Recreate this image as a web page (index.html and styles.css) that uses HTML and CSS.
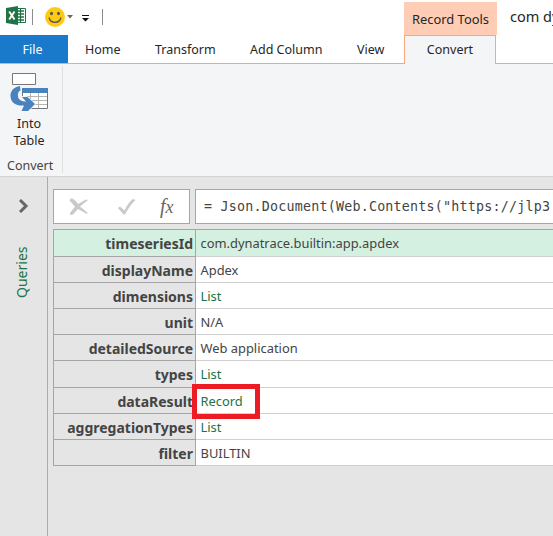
FILE: index.html
```
<!DOCTYPE html>
<html lang="en">
<head>
<meta charset="utf-8">
<title>Query Editor</title>
<link rel="stylesheet" href="styles.css">
</head>
<body>
<div class="app">
  <header class="header">
    <div class="quick">
      <svg class="excel" width="21" height="20" viewBox="0 0 21 20">
        <path d="M11 2.500h8.500v14H11" fill="#fff" stroke="#217346"/>
        <path d="M11 5h7M11 8h7M11 11h7M11 14h7M14.500 3v13" stroke="#217346" stroke-width="1.300"/>
        <path d="M0 2 12 0v19L0 17z" fill="#217346"/>
        <path d="m3.200 5.500 5.300 8M8.500 5.500l-5.300 8" stroke="#fff" stroke-width="1.900"/>
      </svg>
      <i class="sep"></i>
      <svg class="smile" width="20" height="20" viewBox="0 0 20 20">
        <circle cx="10" cy="10" r="10" fill="#ffcb12"/>
        <ellipse cx="6.500" cy="6.500" rx="1.500" ry="1.800" fill="#555"/><ellipse cx="13.500" cy="6.500" rx="1.500" ry="1.800" fill="#555"/>
        <path d="M4 10.500c1.500 6.500 10.500 6.500 12 0" fill="none" stroke="#555" stroke-width="1.300"/>
      </svg>
      <svg class="drop" width="6" height="4" viewBox="0 0 6 4"><path d="M0 0h6L3 3.500z" fill="#666"/></svg>
      <svg class="more" width="7" height="7" viewBox="0 0 7 7"><path d="M0 0h7v1H0zM0 3h7L3.500 6.500z" fill="#111"/></svg>
      <i class="sep"></i>
    </div>
    <div class="context"><span>Record Tools</span></div>
    <div class="title">com dy</div>
  </header>
  <nav class="tabs">
    <div class="tab file">File</div>
    <div class="tab home">Home</div>
    <div class="tab transform">Transform</div>
    <div class="tab add">Add Column</div>
    <div class="tab view">View</div>
    <div class="tab convert">Convert</div>
  </nav>
  <section class="ribbon">
    <div class="group">
      <svg class="into" width="39" height="39" viewBox="0 0 39 39">
        <path d="M2.500.5h23v11h-23z" fill="#fff" stroke="#777"/>
        <path d="M12.500 15.500h25v20h-25z" fill="#fff" stroke="#777"/>
        <path d="M13 23.500h24M13 27.500h24M13 31.500h24M20.500 20v15M28.500 20v15" stroke="#b5b5b5"/>
        <path d="M12 15h26v5H12z" fill="#4a82bd"/>
        <path d="M6 22h6v1h5l9 8-8 8H6z" fill="#f4f5f7"/>
        <path d="M10 13C4 14 0 18 .5 23.500 1 30 6 33 14 32.500L11.500 38H18l7-7-7.500-7H12l4 4.500c-4.500 0-7.500-1.500-8-5-.5-3.500.5-5 2.500-6z" fill="#4a82bd"/>
      </svg>
      <div class="into-label"><span>Into</span><span>Table</span></div>
      <div class="group-label">Convert</div>
    </div>
  </section>
  <main class="workspace">
    <aside class="queries">
      <svg class="chevron" width="10" height="14" viewBox="0 0 10 14"><path d="m1 1 6 6-6 6" fill="none" stroke="#666" stroke-width="3"/></svg>
      <div class="queries-label">Queries</div>
    </aside>
    <div class="content">
      <div class="formula-row">
        <div class="actions">
          <svg width="20" height="18" viewBox="0 0 20 18"><path d="M.5 2.500C2-1 5 .5 9 6l8-4.500 2 .5-8 6.500 8 6.500-1.500.8L9 11l-5 5.500c-2 1-3.500 0-3-1.500L6 8.500z" fill="#c9c9c9"/></svg>
          <svg width="18" height="16" viewBox="0 0 18 16"><path d="M0 9 2 7.500l4.500 4C9 6 12 2 15 0l2.500 1C13 5 10 10 7 15.500H5.500z" fill="#c9c9c9"/></svg>
          <span class="fx"><span>f</span><span class="x">x</span></span>
        </div>
        <div class="formula">= Json.Document(Web.Contents("https://jlp3</div>
      </div>
      <div class="record">
        <div class="row selected"><div class="key">timeseriesId</div><div class="value">com.dynatrace.builtin:app.apdex</div></div>
        <div class="row"><div class="key">displayName</div><div class="value">Apdex</div></div>
        <div class="row"><div class="key">dimensions</div><div class="value link">List</div></div>
        <div class="row"><div class="key">unit</div><div class="value">N/A</div></div>
        <div class="row"><div class="key">detailedSource</div><div class="value">Web application</div></div>
        <div class="row"><div class="key">types</div><div class="value link">List</div></div>
        <div class="row"><div class="key">dataResult</div><div class="value link">Record<i class="highlight"></i></div></div>
        <div class="row"><div class="key">aggregationTypes</div><div class="value link">List</div></div>
        <div class="row"><div class="key">filter</div><div class="value">BUILTIN</div></div>
      </div>
    </div>
  </main>
</div>
</body>
</html>
```
FILE: styles.css
```
* { box-sizing: border-box; }
body { margin: 0; background: #fff; color: #262626; font: 13px/18px "Noto Sans", "Open Sans", sans-serif; }
.app { width: 553px; height: 536px; overflow: hidden; display: flex; flex-direction: column; }
svg { display: block; flex: none; }
.header { height: 35px; display: flex; }
.quick { flex: none; width: 404px; display: flex; align-items: flex-start; padding: 6px 0 0 6px; }
.sep { width: 1px; height: 16px; margin-top: 3px; background: #8c8c8c; }
.excel { margin-right: 5px; }
.smile { margin: 1px 2px 0 12px; }
.drop { margin-top: 9px; }
.more { margin: 9px 13px 0 9px; }
.context { flex: none; width: 93px; margin-top: 2px; background: #ffcdb5; text-align: center; padding-top: 8px; font-size: 12.900px; white-space: nowrap; }
.title { flex: none; padding: 6px 0 0 13px; font-size: 14.500px; line-height: 20px; white-space: nowrap; }
.tabs { height: 29px; display: flex; line-height: 29px; border-bottom: 1px solid #f8a67c; white-space: nowrap; }
.tab { flex: none; height: 28px; font-size: 12.500px; }
.file { width: 68px; background: #1979ca; color: #fff; text-align: center; padding-right: 3px; }
.home { width: 87px; padding-left: 17px; }
.transform { width: 95px; }
.add { width: 107px; }
.view { width: 47px; }
.convert { width: 92px; height: 29px; text-align: center; background: #f4f5f7; border: 1px solid #f8a67c; border-bottom: 0; line-height: 28px; }
.ribbon { height: 113px; padding-top: 2px; background: #f4f5f7; border-bottom: 1px solid #d2d2d2; }
.group { width: 63px; height: 107px; border-right: 1px solid #dedfe1; padding-top: 7px; }
.into { margin-left: 10px; }
.into-label { display: flex; flex-direction: column; align-items: center; padding-right: 4px; line-height: 17px; margin-top: 3px; font-size: 12.500px; }
.group-label { margin: 8px 0 0 7px; font-size: 12.500px; color: #444; }
.workspace { flex: 1; display: flex; background: #e5e5e5; }
.queries { width: 48px; border-right: 1px solid #ababab; }
.chevron { margin: 22px 0 0 19px; }
.queries-label { writing-mode: vertical-rl; transform: rotate(180deg); margin: 34px 0 0 11px; width: 22px; height: 51px; line-height: 22px; font-size: 14px; color: #217346; text-align: right; }
.content { flex: 1; min-width: 0; padding: 12px 0 0 5px; }
.formula-row { display: flex; gap: 5px; height: 35px; }
.actions { flex: none; width: 137px; background: #fff; border: 1px solid #a6a6a6; display: flex; align-items: center; padding-left: 15px; gap: 29px; }
.fx { font: italic 20px/28px "Liberation Serif", serif; color: #666; margin-left: -5px; }
.x { font-size: 18px; }
.formula { flex: 1; min-width: 0; overflow: hidden; background: #fff; border: 1px solid #a6a6a6; border-right: 0; padding-left: 8px; font: 13.330px/33px "DejaVu Sans Mono", monospace; letter-spacing: .22px; color: #444; white-space: pre; }
.record { margin-top: 5px; border-left: 1px solid #a6a6a6; border-top: 1px solid #a6a6a6; }
.row { display: flex; height: 26.120px; }
.key { width: 142px; text-align: right; padding-right: 2px; border-right: 1px solid #a6a6a6; border-bottom: 1px solid #a6a6a6; font-weight: 700; font-size: 14px; color: #444; line-height: 27px; }
.value { position: relative; flex: 1; background: #fff; border-bottom: 1px solid #d0d0d0; padding-left: 4.500px; font-size: 12.900px; line-height: 26px; color: #444; }
.link { color: #217346; }
.selected { height: 27px; }
.selected .key, .selected .value { background: #d3f0e0; }
.highlight { position: absolute; z-index: 1; left: -4px; top: -4px; width: 68px; height: 35px; border: 5px solid #ed1c24; }
```
